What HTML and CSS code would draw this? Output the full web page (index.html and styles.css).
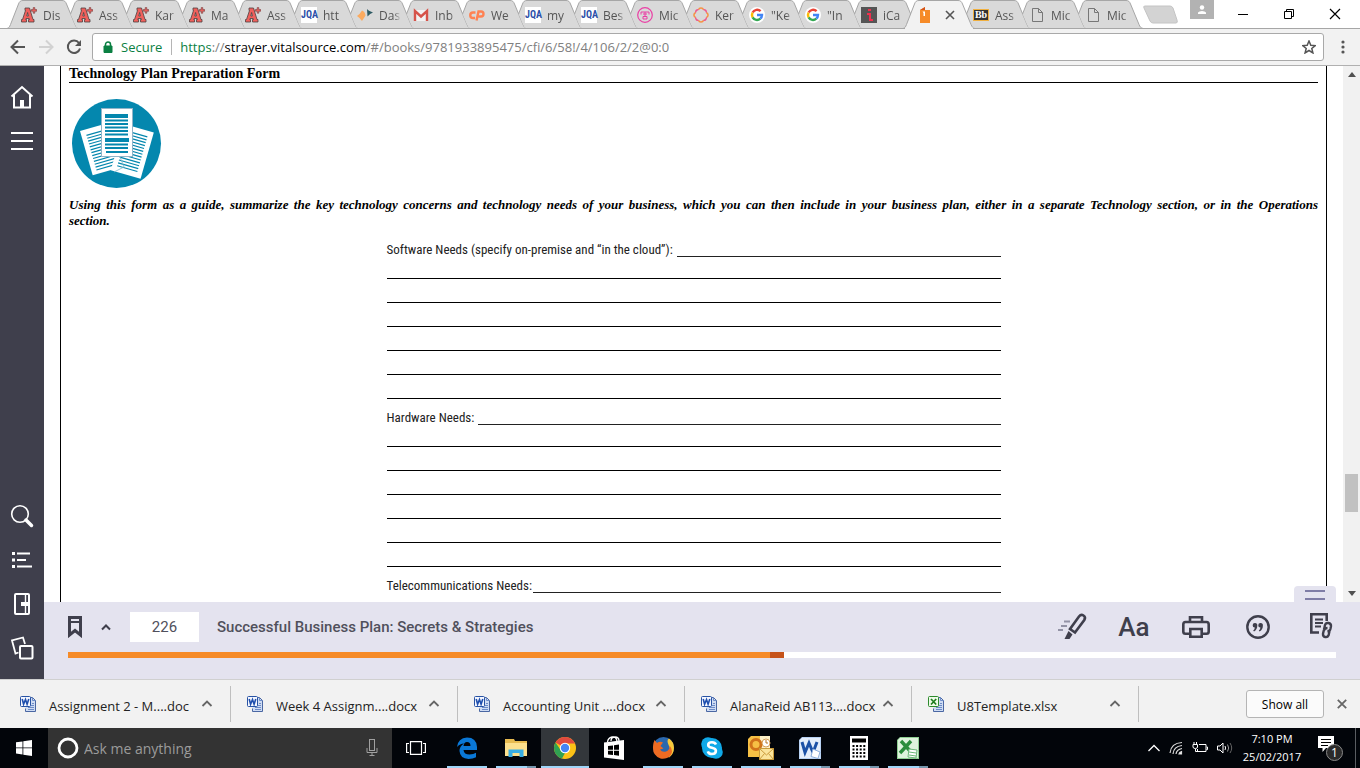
FILE: index.html
```
<!DOCTYPE html>
<html lang="en">
<head>
    <meta charset="UTF-8">
    <title>Successful Business Plan: Secrets &amp; Strategies</title>
    <link rel="stylesheet" href="styles.css">
</head>
<body>
<!-- shared icons -->
<svg class="sprite" width="0" height="0">
    <symbol id="tabFull" viewBox="0 0 72 29">
        <path class="tab-fill" d="M0 28C2 28 2.500 27 3.500 24.500L11.500 4C12.500 1.500 13.500 .5 16 .5H55C57.500 .5 58.500 1.500 59.500 4L68 24.500C69 27 70 28 72 28Z"/>
        <path class="tab-line" d="M0 28.500C2 28 2.500 27 3.500 24.500L11.500 4C12.500 1.500 13.500 .5 16 .5H55C57.500 .5 58.500 1.500 59.500 4L68 24.500C69 27 70 28 72 28.500"/>
    </symbol>
    <!-- left foot is tucked behind the previous tab -->
    <symbol id="tabShape" viewBox="0 0 72 29">
        <path class="tab-fill" d="M16 28C14 28 13 27 12 24.500L7.600 13.900 11.500 4C12.500 1.500 13.500 .5 16 .5H55C57.500 .5 58.500 1.500 59.500 4L68 24.500C69 27 70 28 72 28Z"/>
        <path class="tab-line" d="M7.600 13.900 11.500 4C12.500 1.500 13.500 .5 16 .5H55C57.500 .5 58.500 1.500 59.500 4L68 24.500C69 27 70 28 72 28.500"/>
    </symbol>
    <symbol id="aplus" viewBox="0 0 16 16">
        <path d="M4 1h4.500l3.500 11.500h1V15H7.500v-2.500h1L8.200 11.500H5l-.3 1h.8V15H.5v-2.500h1L4.500 3.500H4ZM6.600 5.500 5.800 9H7.400Z" fill="#f0605c" stroke="#4c4040" stroke-width=".8" fill-rule="evenodd"/>
        <path d="M12.200.6h1.600v2h2v1.600h-2v2h-1.600v-2h-2V2.600h2Z" fill="#f0605c" stroke="#6b4040" stroke-width=".6"/>
    </symbol>
    <symbol id="google" viewBox="0 0 16 16">
        <circle cx="8" cy="8" r="8" fill="#fff"/>
        <g fill="none" stroke-width="2.400">
            <path d="M11.600 4.200A5 5 0 0 0 3.600 5.600" stroke="#ea4335"/>
            <path d="M3.600 5.600A5 5 0 0 0 3.600 10.400" stroke="#fbbc05"/>
            <path d="M3.600 10.400A5 5 0 0 0 11.300 11.700" stroke="#34a853"/>
            <path d="M11.300 11.700A5 5 0 0 0 13 8H8" stroke="#4285f4"/>
        </g>
    </symbol>
    <symbol id="page" viewBox="0 0 16 16">
        <path d="M3.500 1.500h6l4 4v9h-10ZM9.500 1.500v4h4" fill="none" stroke="#777"/>
    </symbol>
    <symbol id="up" viewBox="0 0 12 12">
        <path d="M1.500 8 6 3.500 10.500 8" fill="none" stroke="currentColor" stroke-width="1.800"/>
    </symbol>
    <symbol id="wordfile" viewBox="0 0 16 16">
        <path d="M6.500 1.500h6l3 3v11h-10v-3" fill="#cfdcf3" stroke="#4a67a3"/>
        <path d="M12.500 1.500v3h3M9 9.500h5M8 11.500h6M8 13.500h6M12 7.500h2" fill="none" stroke="#6d8cc8"/>
        <rect x=".5" y=".5" width="10" height="10" rx="1" fill="#f4f7ff" stroke="#2853a4"/>
        <path d="M2.200 3l1.400 5.200L5.500 3.500l1.600 4.700L8.800 3" fill="none" stroke="#1f4fae" stroke-width="1.600"/>
    </symbol>
    <symbol id="excelfile" viewBox="0 0 16 16">
        <path d="M6.500 1.500h6l3 3v11h-10v-3" fill="#cfdcf3" stroke="#4a67a3"/>
        <path d="M12.500 1.500v3h3M9 9.500h5M8 11.500h6M8 13.500h6M12 7.500h2" fill="none" stroke="#6d8cc8"/>
        <rect x=".5" y=".5" width="10" height="10" rx="1" fill="#eefbe9" stroke="#2d8a2d"/>
        <path d="M3 3l5.200 5.500M8.200 3 3 8.500" fill="none" stroke="#1f7d1f" stroke-width="1.700"/>
    </symbol>
</svg>

<div class="tab-strip">
    <div class="tabs">
        <button class="tab"><svg class="shape"><use href="#tabFull"/></svg><svg class="favicon"><use href="#aplus"/></svg><span>Dis</span></button>
        <button class="tab"><svg class="shape"><use href="#tabShape"/></svg><svg class="favicon"><use href="#aplus"/></svg><span>Ass</span></button>
        <button class="tab"><svg class="shape"><use href="#tabShape"/></svg><svg class="favicon"><use href="#aplus"/></svg><span>Kar</span></button>
        <button class="tab"><svg class="shape"><use href="#tabShape"/></svg><svg class="favicon"><use href="#aplus"/></svg><span>Ma</span></button>
        <button class="tab"><svg class="shape"><use href="#tabShape"/></svg><svg class="favicon"><use href="#aplus"/></svg><span>Ass</span></button>
        <button class="tab"><svg class="shape"><use href="#tabShape"/></svg><b class="favicon jqa">JQA</b><span>htt</span></button>
        <button class="tab"><svg class="shape"><use href="#tabShape"/></svg><svg class="favicon" viewBox="0 0 16 16"><path d="M0 9Q3 7 5 3.500q3 1 3.500 5Q7 11 5 14 3 11 0 9Z" fill="#fbab60"/><path d="M10 2q1 1.500 6 3.500-3 1-5.500 4Z" fill="#2d5a63"/></svg><span>Das</span></button>
        <button class="tab"><svg class="shape"><use href="#tabShape"/></svg><svg class="favicon" viewBox="0 0 16 16"><path d="M1 3h14v11H1Z" fill="#f2f2f2"/><path d="M2 14V4l6 5.500L14 4v10" fill="none" stroke="#d6534a" stroke-width="2.400"/></svg><span>Inb</span></button>
        <button class="tab"><svg class="shape"><use href="#tabShape"/></svg><svg class="favicon" viewBox="0 0 16 16"><path d="M6.500 5.500H4a2.600 2.600 0 0 0 0 5.500h2M7.500 13.500 9.500 4.500H12a2.400 2.400 0 0 1 0 5H9.500" fill="none" stroke="#ff8152" stroke-width="2.400"/></svg><span>We</span></button>
        <button class="tab"><svg class="shape"><use href="#tabShape"/></svg><b class="favicon jqa">JQA</b><span>my</span></button>
        <button class="tab"><svg class="shape"><use href="#tabShape"/></svg><b class="favicon jqa">JQA</b><span>Bes</span></button>
        <button class="tab"><svg class="shape"><use href="#tabShape"/></svg><svg class="favicon" viewBox="0 0 16 16"><g fill="none" stroke="#ea3fa5"><circle cx="8" cy="8" r="7.300" stroke-width="1.200"/><path d="M4 7.500V5h8v2.500M6 7h4M8 5v5M6 12h4V9.500H6Z"/></g></svg><span>Mic</span></button>
        <button class="tab"><svg class="shape"><use href="#tabShape"/></svg><svg class="favicon" viewBox="0 0 16 16"><g fill="none" stroke-width="1.500"><path d="M5.500 2.800a2.600 2.600 0 0 1 5 0M13.200 5.500a2.600 2.600 0 0 1 0 5M5.500 13.200a2.600 2.600 0 0 0 5 0M2.800 5.500a2.600 2.600 0 0 0 0 5" stroke="#f7903f"/><path d="M10.500 2.800a2.200 2.200 0 0 1 2.700 2.700M13.200 10.500a2.200 2.200 0 0 1-2.700 2.700M5.500 13.200a2.200 2.200 0 0 1-2.700-2.700M2.800 5.500a2.200 2.200 0 0 1 2.700-2.700" stroke="#ee5a8d"/></g></svg><span>Ker</span></button>
        <button class="tab"><svg class="shape"><use href="#tabShape"/></svg><svg class="favicon"><use href="#google"/></svg><span>"Ke</span></button>
        <button class="tab"><svg class="shape"><use href="#tabShape"/></svg><svg class="favicon"><use href="#google"/></svg><span>"In</span></button>
        <button class="tab"><svg class="shape"><use href="#tabShape"/></svg><svg class="favicon" viewBox="0 0 16 16"><rect width="16" height="16" fill="#555"/><path d="M7 2h3v2H7ZM6 6h4v6h2v2H8V8H6Z" fill="#f0304e"/></svg><span>iCa</span></button>
        <button class="tab active"><svg class="shape"><use href="#tabFull"/></svg><svg class="favicon" viewBox="0 0 16 16"><path d="M3 3 8 0v3h5v13H3Z" fill="#f68b28"/><path d="M3 3 8 0v3H5Z" fill="#d4541a"/><path d="M5.500 4.500H8V9H6.500V6Z" fill="#fff"/></svg><svg class="tab-close" viewBox="0 0 10 10"><path d="m1 1 8 8M9 1 1 9" stroke="#555" stroke-width="1.600"/></svg></button>
        <button class="tab"><svg class="shape"><use href="#tabShape"/></svg><b class="favicon bb">Bb</b><span>Ass</span></button>
        <button class="tab"><svg class="shape"><use href="#tabShape"/></svg><svg class="favicon"><use href="#page"/></svg><span>Mic</span></button>
        <button class="tab"><svg class="shape"><use href="#tabShape"/></svg><svg class="favicon"><use href="#page"/></svg><span>Mic</span></button>
    </div>
    <button class="new-tab" aria-label="New tab"><svg width="36" height="20" viewBox="0 0 36 20"><path d="M3 1h25q2 0 3 2l4 12q1 3-1 3H11q-2 0-3-2L2 3q-1-2 1-2Z" fill="#d3d3d3" stroke="#c4c4c4"/></svg></button>
    <div class="window-buttons">
        <button class="profile" aria-label="Profile"><svg width="10" height="10" viewBox="0 0 10 10" fill="#fff"><circle cx="5" cy="2.500" r="2.200"/><path d="M1 9V7.500Q2 6 5 6t4 1.500V9Z"/></svg></button>
        <button aria-label="Minimize"><svg width="12" height="12" viewBox="0 0 12 12"><path d="M1 6.500h10" stroke="#000"/></svg></button>
        <button aria-label="Restore"><svg width="12" height="12" viewBox="0 0 12 12" fill="none" stroke="#000"><path d="M1.500 3.500h7v7h-7ZM3.500 3.500v-2h7v7h-2"/></svg></button>
        <button aria-label="Close"><svg width="12" height="12" viewBox="0 0 12 12"><path d="m1 1 10 10M11 1 1 11" stroke="#000" stroke-width="1.200"/></svg></button>
    </div>
</div>

<div class="toolbar">
    <button aria-label="Back"><svg width="16" height="16" viewBox="0 0 16 16" fill="none" stroke="#555" stroke-width="2"><path d="M15 8H2.500M8 1.500 1.500 8 8 14.500"/></svg></button>
    <button aria-label="Forward"><svg width="16" height="16" viewBox="0 0 16 16" fill="none" stroke="#d2d2d2" stroke-width="2"><path d="M1 8h12.500M8 1.500 14.500 8 8 14.500"/></svg></button>
    <button aria-label="Reload"><svg width="16" height="16" viewBox="0 0 16 16"><path d="M13 4A6.200 6.200 0 1 0 14 9.500" fill="none" stroke="#555" stroke-width="2"/><path d="M15 1v6H9Z" fill="#555"/></svg></button>
    <div class="address">
        <svg width="10" height="12" viewBox="0 0 10 12"><path d="M1 5h8v6.500H1Z" fill="#0b8043" stroke="#0b8043"/><path d="M2.500 5V3.500a2.500 2.500 0 0 1 5 0V5" fill="none" stroke="#0b8043" stroke-width="1.500"/></svg>
        <span class="secure">Secure</span>
        <span class="url"><span class="scheme">https</span>://<b>strayer.vitalsource.com</b>/#/books/9781933895475/cfi/6/58!/4/106/2/2@0:0</span>
        <button aria-label="Bookmark"><svg width="14" height="14" viewBox="0 0 14 14"><path d="m7 1 1.800 4.200 4.400.4-3.400 2.900 1.100 4.400L7 10.500l-3.900 2.400 1.100-4.400L.8 5.600l4.400-.4Z" fill="none" stroke="#555" stroke-width="1.500"/></svg></button>
    </div>
    <button class="more" aria-label="Menu"><svg width="4" height="14" viewBox="0 0 4 14" fill="#555"><circle cx="2" cy="2" r="1.600"/><circle cx="2" cy="7" r="1.600"/><circle cx="2" cy="12" r="1.600"/></svg></button>
</div>

<div class="reader">
    <nav class="sidebar">
        <button aria-label="Home"><svg width="24" height="24" viewBox="0 0 24 24"><path d="M1.500 11.500 12 2l10.500 9.500M4 10v12.500h16V10" stroke-width="2"/><path d="M10 22v-7h4v7Z" fill="#fff" stroke="none"/></svg></button>
        <button aria-label="Contents"><svg width="24" height="24" viewBox="0 0 24 24"><path d="M1 4h22M1 12h22M1 20h22" stroke-width="2"/></svg></button>
        <button class="push" aria-label="Search"><svg width="24" height="24" viewBox="0 0 24 24"><circle cx="10" cy="10" r="8.300" stroke-width="1.600"/><path d="m16 16 5.500 5.500" stroke-width="3.500" stroke-linecap="round"/></svg></button>
        <button aria-label="Notes"><svg width="24" height="24" viewBox="0 0 24 24"><path d="M2 5.500h3M2 12h3M2 18.500h3" stroke-width="3"/><path d="M7 5.500h13M7 12h9M7 18.500h15" stroke-width="2"/></svg></button>
        <button aria-label="Workbook"><svg width="24" height="24" viewBox="0 0 24 24"><rect x="5" y="2" width="14" height="20" rx="1" stroke-width="2"/><path d="M15.500 2v20" stroke-width="1.400"/><path d="M11 10h7v4h-7Z" fill="#fff" stroke="none"/></svg></button>
        <button aria-label="Flashcards"><svg width="24" height="24" viewBox="0 0 24 24"><path d="M8.500 16.500 5.500 17.500 2 4.500l11-3 2 6.500" stroke-width="1.800"/><rect x="10" y="10" width="12.500" height="12.500" rx="1" stroke-width="2"/></svg></button>
    </nav>
    <div class="main">
        <div class="viewport">
            <div class="book">
                <article>
                    <h1>Technology Plan Preparation Form</h1>
                    <svg class="badge" width="90" height="90" viewBox="0 0 90 90">
                        <circle cx="44.500" cy="44.500" r="44.500" fill="#0487ae"/>
                        <g transform="translate(8 32) rotate(-16)">
                            <rect width="31" height="46" fill="#fff"/>
                            <path d="M5 6h22M5 9h22M5 12h22M5 15h22M5 18h22M5 21h22M5 24h22M5 27h22M5 30h22M5 33h22M5 36h22M5 39h22M5 42h22" stroke="#0487ae" stroke-width="1.200"/>
                        </g>
                        <g transform="translate(52 25) rotate(16)">
                            <rect width="31" height="48" fill="#fff"/>
                            <path d="M5 6h21M5 9h21M5 12h21M5 15h21M5 18h21M5 21h21M5 24h21M5 27h21M5 30h21M5 33h21M5 36h21M5 39h21M5 42h21" stroke="#0487ae" stroke-width="1.200"/>
                        </g>
                        <path d="m48 58 4 10-10 5" fill="none" stroke="#7fb9cd" stroke-width=".8"/>
                        <rect x="29.500" y="9.500" width="31" height="48" fill="#fff" stroke="#8fb4c8"/>
                        <path d="M33 17h23M33 41h24" stroke="#0487ae" stroke-width="4"/>
                        <path d="M33 21.500h23M33 25h23M33 28.500h23M33 32h23M33 35.500h23M33 45.500h23M33 49h23M34 53h22" stroke="#0487ae" stroke-width="2"/>
                    </svg>
                    <p class="intro"><span>Using this form as a guide, summarize the key technology concerns and technology needs of your business, which you can then include in your business plan, either in a separate Technology section, or in the Operations</span> section.</p>
                    <div class="worksheet">
                        <section>
                            <div class="label">Software Needs (specify on-premise and “in the cloud”): <i></i></div>
                            <hr><hr><hr><hr><hr><hr>
                        </section>
                        <section>
                            <div class="label">Hardware Needs: <i></i></div>
                            <hr><hr><hr><hr><hr><hr>
                        </section>
                        <section>
                            <div class="label tight">Telecommunications Needs:<i></i></div>
                            <hr><hr><hr><hr><hr><hr>
                        </section>
                    </div>
                </article>
            </div>
            <div class="scrollbar">
                <svg width="8" height="5" viewBox="0 0 8 5"><path d="M0 5 4 0l4 5Z" fill="#505050"/></svg>
                <div class="track"><div class="thumb"></div></div>
                <svg width="8" height="5" viewBox="0 0 8 5"><path d="M0 0h8L4 5Z" fill="#505050"/></svg>
            </div>
        </div>
        <footer class="reader-bar">
            <button class="handle" aria-label="Toggle bar"></button>
            <div class="bar-row">
                <button aria-label="Bookmark page"><svg width="14" height="22" viewBox="0 0 14 22"><path d="M1.500 1.500h11v17.500L7 14.500 1.500 19Z" fill="none" stroke="#3f3f4c" stroke-width="3"/><path d="M1 6h12" stroke="#3f3f4c" stroke-width="2"/></svg></button>
                <button class="bookmarks" aria-label="Bookmarks"><svg width="12" height="12" viewBox="0 0 12 12"><path d="M2 8.500 6 4.500l4 4" fill="none" stroke="#3f3f4c" stroke-width="2"/></svg></button>
                <input class="page-number" type="text" value="226" aria-label="Page">
                <span class="book-title">Successful Business Plan: Secrets &amp; Strategies</span>
                <div class="tools">
                    <button aria-label="Highlighter"><svg width="32" height="30" viewBox="0 0 32 30"><path d="M8 9.500h6M5 14h6M2 18h5" stroke="#9292a5" stroke-width="2"/><path d="m14 17 9-12.500q2-2.500 4.500-1t.8 4.500L19 20.500Z" fill="none" stroke="#3f3f4c" stroke-width="2.600"/><path d="m12.500 19 4 3.500-3 4.500H8.500Z" fill="#3f3f4c"/></svg></button>
                    <button class="type-size">Aa</button>
                    <button aria-label="Print"><svg width="32" height="30" viewBox="0 0 32 30" fill="none" stroke="#3f3f4c" stroke-width="2.600"><path d="M10 9V5.300h12V9M10 21.700H5.500q-2.200 0-2.200-2.200v-7q0-2.500 2.200-2.500h21q2.200 0 2.200 2.500v7q0 2.200-2.200 2.200H22"/><path d="M10.300 17h11.400v7.700H10.300Z"/></svg></button>
                    <button aria-label="Cite"><svg width="32" height="30" viewBox="0 0 32 30"><circle cx="16" cy="15" r="10.700" fill="none" stroke="#3f3f4c" stroke-width="2.400"/><path d="M13 11a2.300 2.300 0 0 1 2.300 2.500q0 4-3.300 6l-.8-1q1.600-1.200 1.600-3a2.250 2.250 0 0 1 .2-4.500ZM18.600 11a2.300 2.300 0 0 1 2.300 2.500q0 4-3.300 6l-.8-1q1.600-1.200 1.600-3a2.250 2.250 0 0 1 .2-4.500Z" fill="#3f3f4c"/></svg></button>
                    <button aria-label="Copy link"><svg width="32" height="30" viewBox="0 0 32 30" fill="none" stroke="#3f3f4c"><path d="M15 20.500H7.300V2.300h15.400V9" stroke-width="2.600"/><path d="M11 7.500h8M11 11h8M11 14.500h6" stroke-width="1.800"/><path d="M20 17.500 21 13q.8-2.500 3.500-2t2.500 3.200l-.6 2.800q-.6 2.300-3 2.300M23.500 16q-3 0-3.800 2.800l-.7 3q-.2 2.700 2.200 3.200t3.400-1.800l.9-4" stroke-width="2.400"/></svg></button>
                </div>
            </div>
            <div class="progress"><div class="read" style="width: 55.4%"></div><div class="here" style="width: 1.1%"></div></div>
        </footer>
    </div>
</div>

<div class="downloads">
    <button class="file"><svg class="doc"><use href="#wordfile"/></svg><span>Assignment 2 - M....doc</span><svg class="up"><use href="#up"/></svg></button>
    <button class="file"><svg class="doc"><use href="#wordfile"/></svg><span>Week 4 Assignm....docx</span><svg class="up"><use href="#up"/></svg></button>
    <button class="file"><svg class="doc"><use href="#wordfile"/></svg><span>Accounting Unit ....docx</span><svg class="up"><use href="#up"/></svg></button>
    <button class="file"><svg class="doc"><use href="#wordfile"/></svg><span>AlanaReid AB113....docx</span><svg class="up"><use href="#up"/></svg></button>
    <button class="file"><svg class="doc"><use href="#excelfile"/></svg><span>U8Template.xlsx</span><svg class="up"><use href="#up"/></svg></button>
    <button class="show-all">Show all</button>
    <button class="dismiss" aria-label="Close"><svg width="10" height="10" viewBox="0 0 10 10"><path d="m.8.8 8.400 8.400M9.200.8.8 9.200" stroke="#666" stroke-width="1.800"/></svg></button>
</div>

<div class="taskbar">
    <button class="start" aria-label="Start"><svg width="16" height="16" viewBox="0 0 16 16" fill="#fff"><path d="M0 2.300 6.500 1.400v6.100H0ZM7.300 1.200 16 0v7.500H7.300ZM0 8.300h6.500v6.200L0 13.600ZM7.300 8.300H16V16l-8.700-1.300Z"/></svg></button>
    <label class="cortana">
        <svg width="22" height="22" viewBox="0 0 22 22"><circle cx="11" cy="11" r="9" fill="none" stroke="#fff" stroke-width="2.800"/></svg>
        <input type="text" placeholder="Ask me anything">
        <svg width="12" height="18" viewBox="0 0 12 18" fill="none" stroke="#a0a0a0"><rect x="3.500" y=".5" width="5" height="11"/><path d="M1 9v4.500h10V9M6 14v3M3.500 16.500h5"/></svg>
    </label>
    <button class="app" aria-label="Task view"><svg width="20" height="14" viewBox="0 0 20 14" fill="none" stroke="#fff" stroke-width="1.200"><path d="M4.500.6h11v12.800h-11ZM3 2.500H.6v9H3M17 2.500h2.400v9H17"/></svg></button>
    <div class="apps">
        <button class="app open" aria-label="Edge"><svg width="22" height="22" viewBox="0 0 22 22"><path d="M1 10Q2 1 11 .5q9.500 0 10 9.500v3H7.500q.5 4.500 6 4.500 4 0 6.500-1.800v4.600Q17 22 12.500 22 4 21.500 3.500 14 3.500 9 8 6.500 4 6.500 1 10ZM7.500 9h7Q14.500 5 11 5 8 5 7.500 9Z" fill="#0a78d7"/></svg></button>
        <button class="app open many" aria-label="Explorer"><svg width="22" height="20" viewBox="0 0 22 20"><path d="M0 1h9l1 2h12v15H0Z" fill="#e8bb50"/><path d="M0 5h22v13H0Z" fill="#fde08d"/><path d="M3.500 19v-7.500h15V19h-4v-4h-7v4Z" fill="#39aee3"/></svg></button>
        <button class="app open current" aria-label="Chrome"><svg width="22" height="22" viewBox="0 0 22 22"><circle cx="11" cy="11" r="11" fill="#fbc116"/><path d="M11 11 1.500 5.500a11 11 0 0 1 19 0L21 6.500H11Z" fill="#e04a3f"/><path d="M1.500 5.500 7 13.500l4 2.500-3 5.600A11 11 0 0 1 1.500 5.500Z" fill="#30a152"/><circle cx="11" cy="11" r="5.200" fill="#fff"/><circle cx="11" cy="11" r="4.200" fill="#4484f3"/></svg></button>
        <button class="app" aria-label="Store"><svg width="22" height="24" viewBox="0 0 22 24"><path d="M4.500 6Q5 2 9 1t5 4M8 5q0-4 4-4t4 4" fill="none" stroke="#fff" stroke-width="1.300"/><path d="M1 6.500 21 4v20L1 21.500Z" fill="#fff"/><path d="m5 10 5-.6v4.300H5ZM11 9.200l5-.7v5.200h-5ZM5 14.700h5V19l-5-.5ZM11 14.700h5v5l-5-.6Z" fill="#000"/></svg></button>
        <button class="app open" aria-label="Firefox"><svg width="22" height="22" viewBox="0 0 22 22"><circle cx="11.500" cy="10.500" r="10.500" fill="#2b68ad"/><path d="M17 1.500Q22 5 22 11t-5.500 10Q20 15 17 9t0-7.500Z" fill="#f8c93a"/><path d="M2.500 3 5 6q3-2 6-.5L8.500 9l3 2.500-3.500 1q2 3 6 2 4-1.500 3.500-6 4.500 5 1 10-4 4-10 3-8-3-7.500-11.500Q1 6 2.500 3Z" fill="#ee6b22"/></svg></button>
        <button class="app open" aria-label="Skype"><svg width="22" height="22" viewBox="0 0 22 22"><circle cx="7" cy="7" r="6.800" fill="#10a9e8"/><circle cx="15" cy="15" r="6.800" fill="#10a9e8"/><circle cx="11" cy="11" r="10" fill="#10a9e8"/><path d="M15 7.500Q14 5.200 11 5.200q-3.800 0-3.800 2.700 0 2 3.800 2.900t3.900 3Q14.900 17 11 17q-3.500 0-4.200-2.700" fill="none" stroke="#fff" stroke-width="2.600"/></svg></button>
        <button class="app open" aria-label="Outlook"><svg width="26" height="26" viewBox="0 0 26 26"><path d="M3 1h19v21H0V4Z" fill="#f6c045"/><path d="M12 1h10v19H12Z" fill="#fdf0c8"/><circle cx="8" cy="9.500" r="5" fill="none" stroke="#d1731b" stroke-width="3"/><circle cx="18" cy="8" r="4" fill="#fff" stroke="#d7a05a"/><path d="M18 5v3h2" fill="none" stroke="#b57426"/><path d="M11.500 13.500h14v11h-14Z" fill="#fbe49b" stroke="#c99b3b"/><path d="m11.500 13.500 7 6.500 7-6.500M11.500 24.500l5-6M25.500 24.500l-5-6" fill="none" stroke="#c99b3b"/></svg></button>
        <button class="app open many" aria-label="Word"><svg width="22" height="22" viewBox="0 0 22 22"><path d="M3 0h19v22H0V3Z" fill="#b8d2f3"/><path d="M3 1h18v20H1V3Z" fill="#e4eefb"/><path d="m3 5 3 10.500L10 6l4 9.500L18 5" fill="none" stroke="#1b51a6" stroke-width="3"/><path d="m14 12 7 3-2 6.500-7-2Z" fill="#fff" stroke="#8caedb"/></svg></button>
        <button class="app open many" aria-label="Calculator"><svg width="18" height="24" viewBox="0 0 18 24"><path d="M0 0h18v24H0Z" fill="#fff"/><path d="M2 2.500h14v4H2Z" fill="#000"/><path d="M2.500 10h13M2.500 13.500h13M2.500 17h13M2.500 20.500h13" stroke="#000" stroke-width="2" stroke-dasharray="2 1.600"/></svg></button>
        <button class="app open many" aria-label="Excel"><svg width="22" height="22" viewBox="0 0 22 22"><path d="M3 0h19v22H0V3Z" fill="#8fcf93"/><path d="M3 1h18v20H1V3Z" fill="#def3dd"/><path d="m4 4 11 12M14 4 3 16" stroke="#2b8d3c" stroke-width="3.400"/><path d="m12 12 8 1-1 8-8-1Z" fill="#fff" stroke="#6db879"/><path d="m12 15 7 1M12 18l7 1" stroke="#6db879"/></svg></button>
    </div>
    <div class="tray">
        <svg width="12" height="12" viewBox="0 0 12 12" fill="none" stroke="#fff" stroke-width="1.300"><path d="M.5 9 6 3.500 11.500 9"/></svg>
        <svg width="14" height="14" viewBox="0 0 14 14" fill="none" stroke="#ddd" stroke-width="1.200"><path d="M1 12Q2 2 13 1.500M4 13Q4.500 5.500 13 4.500M7 13Q7.500 8.500 13 7.500"/><path d="M10 13q.5-2 2.500-2.500V13Z" fill="#fff"/></svg>
        <svg width="16" height="12" viewBox="0 0 16 12" fill="none" stroke="#fff"><path d="M7 2.500h7v7H5.500V7M14.500 5h1v2.500h-1M1 2.500h4.500V5q0 1.500-2.200 1.500T1 5ZM2 0v2M4.500 0v2M3.500 7v2.500H6"/></svg>
        <svg width="16" height="12" viewBox="0 0 16 12" fill="none" stroke="#fff"><path d="M.5 4h2.500l3-3v10L3 8H.5ZM8 4q1.200 2 0 4"/><path d="M10.500 2.500q2.400 3.500 0 7" stroke="#999"/><path d="M13 1q3.400 5 0 10" stroke="#666"/></svg>
        <div class="clock">7:10 PM<br>25/02/2017</div>
        <button class="notify" aria-label="Notifications"><svg width="18" height="18" viewBox="0 0 18 18"><path d="M1 1h16v12H9l-3.500 4V13H1Z" fill="#fff"/><path d="M4 4.500h10M4 7.500h10M4 10.500h7" stroke="#000"/></svg><span>1</span></button>
        <div class="desktop"></div>
    </div>
</div>
</body>
</html>
```
FILE: styles.css
```
* {
    box-sizing: border-box;
}

body {
    margin: 0;
    height: 100vh;
    display: flex;
    flex-direction: column;
    overflow: hidden;
    font-family: "Open Sans", "Noto Sans", sans-serif;
    font-size: 12px;
    background: #fff;
}

button {
    border: 0;
    padding: 0;
    background: none;
    font: inherit;
    color: inherit;
    display: flex;
    align-items: center;
    justify-content: center;
    flex-shrink: 0;
}

svg {
    flex-shrink: 0;
}

.sprite {
    position: absolute;
}

/* tabs */
.tab-strip {
    display: flex;
    height: 29px;
    padding-left: 7px;
    border-bottom: 1px solid #a6a6a6;
}

.tabs {
    display: flex;
    isolation: isolate;
}

.tab {
    position: relative;
    width: 72px;
    height: 29px;
    margin-right: -16px;
    padding: 1px 0 0 14px;
    justify-content: flex-start;
    color: #555;
}

.tab .shape {
    position: absolute;
    left: 0;
    top: 0;
    width: 72px;
    height: 29px;
    z-index: -1;
}

.tab-fill {
    fill: var(--tab-color, #d9d9d9);
}

.tab-line {
    fill: none;
    stroke: #a6a6a6;
}

.tab.active {
    --tab-color: #f2f2f2;
    z-index: 2;
}

.tab.active::after {
    content: "";
    position: absolute;
    left: 2px;
    right: 2px;
    bottom: 0;
    height: 1px;
    background: #f2f2f2;
}

.favicon {
    width: 16px;
    height: 16px;
    line-height: 16px;
    text-align: center;
}

.jqa {
    background: #fff;
    color: #2c4fa8;
    font-family: "Roboto Condensed", Roboto, sans-serif;
    font-size: 10px;
}

.bb {
    height: 12px;
    background: #333;
    border: 1px solid #f0b040;
    color: #fff;
    font-family: "Liberation Serif", serif;
    font-size: 10px;
    line-height: 10px;
}

.tab span {
    width: 22px;
    margin-left: 6px;
    text-align: left;
    white-space: nowrap;
    -webkit-mask-image: linear-gradient(90deg, #000 70%, transparent);
    mask-image: linear-gradient(90deg, #000 70%, transparent);
}

.tab-close {
    width: 10px;
    height: 10px;
    margin-left: 12px;
}

.new-tab {
    margin: 4px 0 0 15px;
    height: 22px;
}

.window-buttons {
    display: flex;
    margin: 0 2px 0 auto;
}

.window-buttons button {
    width: 46px;
    height: 28px;
}

.window-buttons .profile {
    width: 24px;
    height: 19px;
    margin-right: 6px;
    background: #b2b2b2;
}

/* toolbar */
.toolbar {
    display: flex;
    align-items: center;
    gap: 12px;
    height: 37px;
    padding: 0 10px;
    background: #f2f2f2;
    border-bottom: 1px solid #b0b0b0;
}

.address {
    flex: 1;
    display: flex;
    align-items: center;
    height: 28px;
    margin-left: -2px;
    padding: 0 7px 0 10px;
    font-size: 13px;
    background: #fff;
    border: 1px solid #a9a9a9;
    border-radius: 3px;
}

.secure {
    margin-left: 8px;
    padding-right: 9px;
    line-height: 16px;
    color: #0b8043;
    border-right: 1px solid #b5b5b5;
}

.url {
    flex: 1;
    margin-left: 8px;
    color: #808080;
}

.url b {
    font-weight: normal;
    color: #000;
}

.scheme {
    color: #0b8043;
}

.more {
    width: 14px;
}

/* reader */
.reader {
    flex: 1;
    display: flex;
    min-height: 0;
}

.sidebar {
    display: flex;
    flex-direction: column;
    width: 44px;
    padding: 9px 0;
    background: #3f3f4c;
}

.sidebar button {
    width: 44px;
    height: 44px;
}

.sidebar svg {
    fill: none;
    stroke: #fff;
}

.sidebar .push {
    margin-top: auto;
}

.main {
    flex: 1;
    display: flex;
    flex-direction: column;
    min-width: 0;
}

.viewport {
    flex: 1;
    display: flex;
    min-height: 0;
}

.book {
    flex: 1;
    padding: 0 16px;
    overflow: hidden;
}

article {
    padding: 0 8px;
    border: solid #000;
    border-width: 0 1px;
    font-family: "Liberation Serif", serif;
}

h1 {
    margin: 0;
    font-size: 14px;
    line-height: 16px;
    border-bottom: 1px solid #000;
}

.badge {
    display: block;
    margin: 16px 0 0 3px;
}

.intro {
    margin: 8px 0 2px;
    font-size: 13px;
    font-weight: bold;
    font-style: italic;
    line-height: 16px;
    text-align: justify;
}

.intro span {
    display: block;
    text-align-last: justify;
}

.worksheet {
    max-width: 614px;
    margin: 0 auto;
    font-family: "Roboto Condensed", Roboto, sans-serif;
    font-size: 13px;
    color: #222;
}

.label {
    display: flex;
    align-items: flex-end;
    gap: 4px;
    height: 26px;
    line-height: 14px;
}

.label.tight {
    gap: 1px;
}

.label i {
    flex: 1;
    border-bottom: 1px solid #222;
}

hr {
    height: 24px;
    margin: 0;
    border: 0;
    border-bottom: 1px solid #000;
}

.label + hr {
    height: 22px;
}

.scrollbar {
    display: flex;
    flex-direction: column;
    align-items: center;
    width: 17px;
    padding: 6px 0;
    background: #f1f1f1;
}

.track {
    flex: 1;
    width: 13px;
    display: flex;
    flex-direction: column;
    justify-content: flex-end;
    padding-bottom: 79px;
}

.thumb {
    height: 38px;
    background: #c1c1c1;
}

/* bottom bar of the reader */
.reader-bar {
    position: relative;
    height: 77px;
    padding: 0 24px;
    background: #e4e3ef;
    color: #50505c;
    font-family: Roboto, sans-serif;
}

.handle {
    position: absolute;
    right: 24px;
    top: -16px;
    width: 42px;
    height: 16px;
    background: #e4e3ef;
    border-radius: 4px 4px 0 0;
}

.handle::before {
    content: "";
    width: 20px;
    height: 6px;
    margin-top: 2px;
    border: solid #7f7da6;
    border-width: 2px 0;
}

.bar-row {
    display: flex;
    align-items: center;
    height: 50px;
}

.bookmarks {
    margin-left: 18px;
}

.page-number {
    width: 69px;
    height: 30px;
    margin: 0 18px;
    padding: 0;
    border: 0;
    background: #fff;
    font: 15px Roboto, sans-serif;
    color: #50505c;
    text-align: center;
}

.book-title {
    font-size: 15px;
    font-weight: 500;
}

.tools {
    display: flex;
    gap: 30px;
    margin-left: auto;
}

.tools button {
    width: 32px;
    height: 30px;
}

.tools .type-size {
    font-size: 26px;
    font-weight: 500;
    color: #3f3f4c;
}

.progress {
    display: flex;
    height: 6px;
    background: #fff;
}

.read {
    background: #f68b28;
}

.here {
    background: #c6531a;
}

/* downloads */
.downloads {
    display: flex;
    align-items: center;
    height: 49px;
    padding: 0 13px 0 4px;
    background: #f2f2f2;
    border-top: 1px solid #d0d0d0;
}

.file {
    width: 227px;
    height: 36px;
    padding: 0 17px 0 16px;
    font-size: 13px;
    color: #222;
    border-right: 1px solid #bfbfbf;
}

.file span {
    flex: 1;
    margin: 4px 0 0 13px;
    text-align: left;
    white-space: nowrap;
}

.doc {
    width: 16px;
    height: 16px;
}

.up {
    width: 12px;
    height: 12px;
    color: #666;
}

.show-all {
    width: 78px;
    height: 28px;
    margin: 0 13px 0 auto;
    background: #fbfbfb;
    border: 1px solid #b5b5b5;
    border-radius: 3px;
    color: #000;
}

/* taskbar */
.taskbar {
    display: flex;
    height: 40px;
    background: #02050a;
    color: #fff;
}

.start {
    width: 48px;
}

.cortana {
    display: flex;
    align-items: center;
    width: 344px;
    padding: 0 14px 0 9px;
    background: #333;
}

.cortana input {
    flex: 1;
    min-width: 0;
    margin-left: 5px;
    padding: 0;
    border: 0;
    background: none;
    font: 14px "Open Sans", sans-serif;
}

.cortana input::placeholder {
    color: #9b9b9b;
}

.app {
    position: relative;
    width: 48px;
}

.apps {
    display: flex;
    gap: 1px;
    margin-left: 3px;
}

.app.open::after {
    content: "";
    position: absolute;
    left: 4px;
    right: 4px;
    bottom: 0;
    height: 2px;
    background: #9fd5f8;
}

.app.many::after {
    background: linear-gradient(90deg, #9fd5f8 31px, #7596ad 31px);
}

.app.current {
    background: #33373b;
}

.app.current::after {
    left: 0;
    right: 0;
}

.tray {
    display: flex;
    align-items: center;
    gap: 9px;
    margin-left: auto;
}

.clock {
    width: 60px;
    font-size: 11px;
    line-height: 18px;
    text-align: center;
}

.notify {
    position: relative;
    width: 26px;
    height: 26px;
    margin: 0 3px 0 6px;
    align-items: flex-start;
    justify-content: flex-start;
}

/* count bubble over the message icon */
.notify span {
    position: absolute;
    right: 0;
    bottom: 0;
    width: 17px;
    height: 17px;
    background: #2b2b2b;
    border: 1px solid #8a8a8a;
    border-radius: 50%;
    line-height: 15px;
    text-align: center;
}

.desktop {
    width: 5px;
    height: 40px;
    border-left: 1px solid #5a5d61;
}
```
